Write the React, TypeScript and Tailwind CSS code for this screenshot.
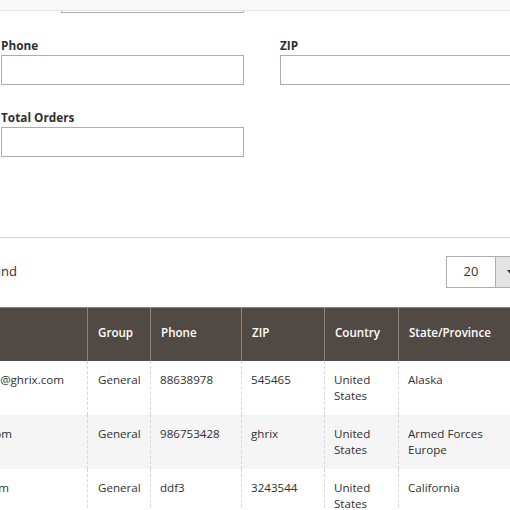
import React from "react";

const cols = "grid grid-cols-[87px_63px_91px_83px_74px_150px]";

type Row = { email: string; pr: string; group: string; phone: string; zip: string; country: string; state: string; bg: string };

const rows: Row[] = [
  { email: "veronica.costello@ghrix.com", pr: "pr-[23px]", group: "General", phone: "88638978", zip: "545465", country: "United States", state: "Alaska", bg: "bg-white" },
  { email: "john.smith@ghrix.com", pr: "pr-[75px]", group: "General", phone: "986753428", zip: "ghrix", country: "United States", state: "Armed Forces Europe", bg: "bg-[#f5f5f5]" },
  { email: "testuser@ghrix.com", pr: "pr-[78px]", group: "General", phone: "ddf3", zip: "3243544", country: "United States", state: "California", bg: "bg-white" },
];

function Field({ label }: { label: string }) {
  return (
    <div className="flex flex-col">
      <div className="text-[11.8px] font-bold leading-[16px] text-[#303030] mb-[2px] whitespace-nowrap">{label}</div>
      <div className="h-[30px] w-[243px] border border-[#adadad] bg-white" />
    </div>
  );
}

export default function App() {
  return (
    <div className="relative w-[510px] h-[510px] overflow-hidden bg-white font-['Open_Sans',sans-serif] text-[#303030]">
      {/* top strip */}
      <div className="relative h-[13px]">
        <div className="absolute left-[61px] top-[-20px] w-[183px] h-[33px] border border-[#adadad] bg-white" />
        <div className="absolute left-0 top-0 w-full h-[11px] bg-[#f8f8f8] border-b border-[#e3e3e3]" />
      </div>

      {/* filter form */}
      <div className="pl-[1px] pt-[24px] pb-[80px] bg-white">
        <div className="grid grid-cols-[243px_243px] gap-x-[36px] gap-y-[24px]">
          <Field label="Phone" />
          <Field label="ZIP" />
          <Field label="Total Orders" />
        </div>
      </div>

      {/* toolbar */}
      <div className="border-t border-[#d6d6d6] h-[70px] flex items-center">
        <div className="w-[17px] shrink-0 flex justify-end whitespace-nowrap text-[13px] leading-[18px] mb-[4px]">
          3 records found
        </div>
        <div className="ml-[429px] shrink-0 flex h-[32px] mb-[1px]">
          <div className="w-[50px] h-full border border-[#adadad] bg-white flex items-center justify-center text-[13px] text-[#303030]">
            20
          </div>
          <div className="w-[33px] h-full border border-l-0 border-[#adadad] bg-[#e3e3e3] flex items-center pl-[11px]">
            <svg width="8" height="5" viewBox="0 0 8 5">
              <path d="M0 0 H8 L4 5 Z" fill="#303030" />
            </svg>
          </div>
        </div>
      </div>

      {/* grid */}
      <div className="w-[548px]">
        <div className={`${cols} h-[54px] bg-[#514943] border-t border-[#8a837f] text-white text-[11.6px] font-semibold`}>
          <div />
          {["Group", "Phone", "ZIP", "Country", "State/Province"].map((h) => (
            <div key={h} className="border-l border-[#8a837f] pl-[10px] flex items-center pb-[3px] whitespace-nowrap">
              {h}
            </div>
          ))}
        </div>
        {rows.map((r, i) => (
          <div key={i} className={`${cols} h-[54px] ${r.bg} text-[11.6px] leading-[16px] text-[#303030]`}>
            <div className={`overflow-hidden flex justify-end whitespace-nowrap pt-[11px] ${r.pr}`}>
              <span>{r.email}</span>
            </div>
            <div className="border-l border-dashed border-[#d6d6d6] pl-[10px] pt-[11px]">{r.group}</div>
            <div className="border-l border-dashed border-[#d6d6d6] pl-[9px] pt-[11px]">{r.phone}</div>
            <div className="border-l border-dashed border-[#d6d6d6] pl-[9px] pt-[11px]">{r.zip}</div>
            <div className="border-l border-dashed border-[#d6d6d6] pl-[9px] pt-[11px] pr-[10px]">{r.country}</div>
            <div className="border-l border-dashed border-[#d6d6d6] pl-[9px] pt-[11px] pr-[40px]">{r.state}</div>
          </div>
        ))}
      </div>
    </div>
  );
}
